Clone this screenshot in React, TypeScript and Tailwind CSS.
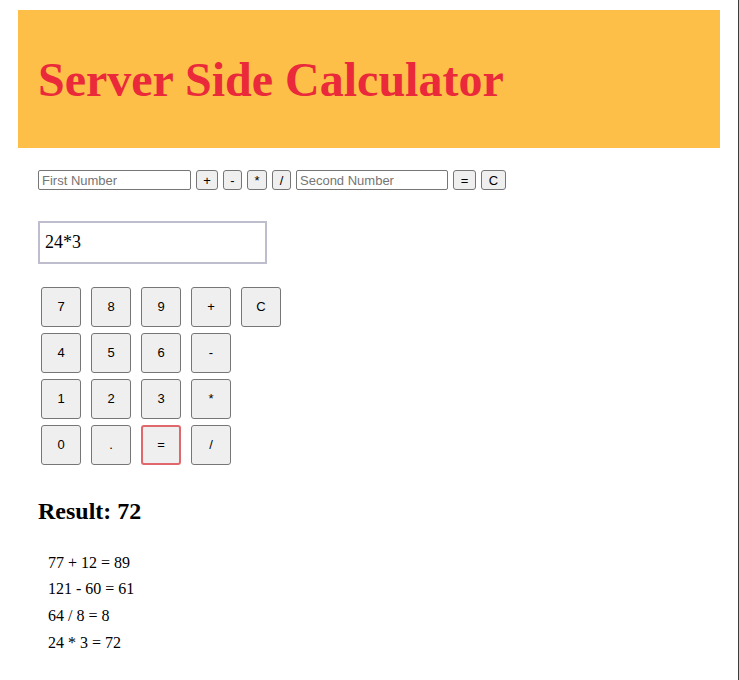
import { useState } from 'react';

const keys = ['7', '8', '9', '+', 'C', '4', '5', '6', '-', '', '1', '2', '3', '*', '', '0', '.', '=', '/', ''];

const history = ['77 + 12 = 89', '121 - 60 = 61', '64 / 8 = 8', '24 * 3 = 72'];

export default function App() {
  const [display, setDisplay] = useState('24*3');

  const press = (k: string) => {
    if (k === 'C') setDisplay('');
    else if (k !== '=') setDisplay(display + k);
  };

  return (
    <div className="min-h-screen w-[739px] border-r border-[#3c3c3c] bg-white px-[18px] pt-[10px] pb-8 font-['Liberation_Serif',serif] text-black">
      <div className="bg-[#fdbf47] px-[20px] pt-[42px] pb-[41px]">
        <h1 className="text-[48px] leading-[55px] font-bold text-[#ea293b]">Server Side Calculator</h1>
      </div>

      {/* form row */}
      <div className="mt-[22px] ml-[20px] flex items-center gap-[5px] font-['Liberation_Sans',Arial,sans-serif] text-[13px]">
        <input
          placeholder="First Number"
          className="h-[20px] w-[153px] rounded-[2px] border border-[#767676] px-[3px] placeholder:text-[#757575] outline-none"
        />
        <button className="h-[20px] w-[22px] rounded-[3px] border border-[#767676] bg-[#efefef]">+</button>
        <button className="h-[20px] w-[19px] rounded-[3px] border border-[#767676] bg-[#efefef]">-</button>
        <button className="h-[20px] w-[20px] rounded-[3px] border border-[#767676] bg-[#efefef]">*</button>
        <button className="h-[20px] w-[19px] rounded-[3px] border border-[#767676] bg-[#efefef]">/</button>
        <input
          placeholder="Second Number"
          className="h-[20px] w-[152px] rounded-[2px] border border-[#767676] px-[3px] placeholder:text-[#757575] outline-none"
        />
        <button className="h-[20px] w-[23px] rounded-[3px] border border-[#767676] bg-[#efefef]">=</button>
        <button className="h-[20px] w-[25px] rounded-[3px] border border-[#767676] bg-[#efefef]">C</button>
      </div>

      {/* display */}
      <div className="mt-[31px] ml-[20px] flex h-[43px] w-[229px] items-center border-2 border-[#bebdcd] px-[5px] text-[18px]">
        {display}
      </div>

      {/* keypad */}
      <div className="mt-[23px] ml-[23px] grid w-[240px] grid-cols-5 gap-x-[10px] gap-y-[6px] font-['Liberation_Sans',Arial,sans-serif] text-[13px]">
        {keys.map((k, i) =>
          k === '' ? (
            <div key={i} />
          ) : (
            <button
              key={i}
              onClick={() => press(k)}
              className={
                k === '='
                  ? 'h-[40px] w-[40px] rounded-[3px] border-2 border-[#e0686d] bg-[#efefef]'
                  : 'h-[40px] w-[40px] rounded-[3px] border border-[#767676] bg-[#efefef]'
              }
            >
              {k}
            </button>
          )
        )}
      </div>

      <h2 className="mt-[33px] ml-[20px] text-[24px] leading-[27.6px] font-bold">Result: 72</h2>

      <ul className="mt-[24px] ml-[30px] text-[16px] leading-[26.67px]">
        {history.map((h) => (
          <li key={h}>{h}</li>
        ))}
      </ul>
    </div>
  );
}
